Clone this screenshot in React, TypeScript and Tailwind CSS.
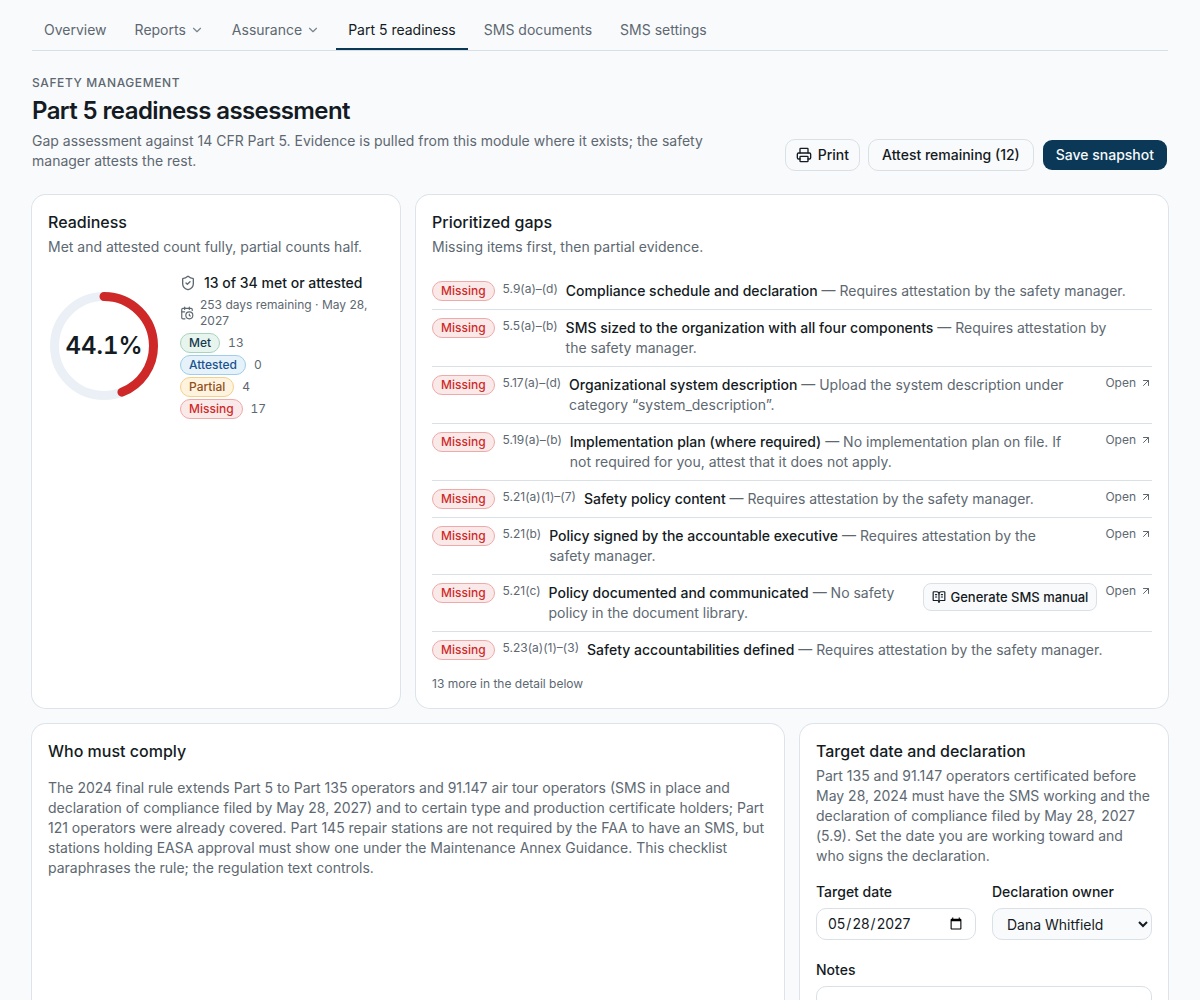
import type { ReactNode } from "react";
import {
  ArrowUpRight,
  BookOpenText,
  CalendarClock,
  ChevronDown,
  Printer,
  ShieldCheck,
} from "lucide-react";

const tabs = [
  { label: "Overview" },
  { label: "Reports", menu: true },
  { label: "Assurance", menu: true },
  { label: "Part 5 readiness", active: true },
  { label: "SMS documents" },
  { label: "SMS settings" },
];

const badgeStyles = {
  Met: "border-[#a9d3bc] bg-[#e8f4ee] text-[#15394f]",
  Attested: "border-[#9fcdea] bg-[#e5f2fa] text-[#1b5391]",
  Partial: "border-[#f5d08a] bg-[#fef3df] text-[#92501b]",
  Missing: "border-[#efa9a9] bg-[#fae9e9] text-[#cf2a2a]",
};

type Status = keyof typeof badgeStyles;

const counts: { status: Status; count: number }[] = [
  { status: "Met", count: 13 },
  { status: "Attested", count: 0 },
  { status: "Partial", count: 4 },
  { status: "Missing", count: 17 },
];

const attestation = "Requires attestation by the safety manager.";

const gaps = [
  { cite: "5.9(a)–(d)", title: "Compliance schedule and declaration", detail: attestation },
  {
    cite: "5.5(a)–(b)",
    title: "SMS sized to the organization with all four components",
    detail: "Requires attestation by the\u00a0safety manager.",
  },
  {
    cite: "5.17(a)–(d)",
    title: "Organizational system description",
    detail: "Upload the system description under category “system_description”.",
    open: true,
  },
  {
    cite: "5.19(a)–(b)",
    title: "Implementation plan (where required)",
    detail: "No implementation plan on file. If not\u00a0required for you, attest that it does not apply.",
    open: true,
  },
  { cite: "5.21(a)(1)–(7)", title: "Safety policy content", detail: attestation, open: true },
  {
    cite: "5.21(b)",
    title: "Policy signed by the accountable executive",
    detail: "Requires attestation by the safety\u00a0manager.",
    open: true,
  },
  {
    cite: "5.21(c)",
    title: "Policy documented and communicated",
    detail: "No safety policy in the document library.",
    open: true,
    generate: true,
  },
  { cite: "5.23(a)(1)–(3)", title: "Safety accountabilities defined", detail: attestation },
];

const Badge = ({ status }: { status: Status }) => (
  <span
    className={`inline-flex h-5 shrink-0 items-center rounded-full border px-2 text-xs font-medium ${badgeStyles[status]}`}
  >
    {status}
  </span>
);

type CardProps = {
  title: string;
  description?: string;
  className?: string;
  children: ReactNode;
};

const Card = ({ title, description, className = "", children }: CardProps) => (
  <section className={`flex flex-col gap-4 rounded-[14px] bg-white p-4 ring-1 ring-[#dde3e8] ${className}`}>
    <div className="flex flex-col gap-1">
      <h2 className="text-base leading-[22px] font-medium">{title}</h2>
      {description && <p className="text-[#5d6871]">{description}</p>}
    </div>
    {children}
  </section>
);

const ScoreRing = ({ value }: { value: number }) => (
  <div className="relative flex size-28 shrink-0 items-center justify-center">
    <svg viewBox="0 0 112 112" className="absolute inset-0 -rotate-90" fill="none" strokeWidth="9">
      <circle cx="56" cy="56" r="49.5" stroke="#eaf0f5" />
      <circle
        cx="56"
        cy="56"
        r="49.5"
        stroke="#ce2828"
        strokeLinecap="round"
        pathLength="100"
        strokeDasharray={`${value} 100`}
      />
    </svg>
    <span className="relative text-2xl font-semibold tabular-nums">{value}%</span>
  </div>
);

const App = () => {
  return (
    <div className="min-h-screen bg-[#f9fafc] px-8 pt-2.5 pb-8 font-['Inter',sans-serif] text-sm text-[#141b23]">
      <nav className="flex gap-1 border-b border-[#d6dfe6]">
        {tabs.map((tab) => (
          <a
            key={tab.label}
            href="#"
            className={`flex h-10 items-center gap-1 border-b-2 px-3 pt-0.5 ${
              tab.active ? "border-[#0b3856]" : "border-transparent text-[#5d6871]"
            }`}
          >
            {tab.label}
            {tab.menu && <ChevronDown className="size-3.5 opacity-80" />}
          </a>
        ))}
      </nav>

      <header className="mt-6 flex items-end justify-between gap-4">
        <div className="max-w-2xl">
          <p className="text-xs font-medium tracking-wider text-[#5d6871] uppercase">Safety management</p>
          <h1 className="mt-1 text-2xl font-semibold tracking-tight">Part 5 readiness assessment</h1>
          <p className="mt-1 text-[#5d6871]">
            Gap assessment against 14 CFR Part 5. Evidence is pulled from this module where it exists; the
            safety manager attests the rest.
          </p>
        </div>
        <div className="flex shrink-0 gap-2">
          <button className="flex h-8 items-center gap-1.5 rounded-[10px] border border-[#d9e1e7] px-2.5 font-medium">
            <Printer className="size-4" />
            Print
          </button>
          <button className="flex h-8 items-center rounded-[10px] border border-[#d9e1e7] px-[13px] font-medium">
            Attest remaining (12)
          </button>
          <button className="flex h-8 items-center rounded-[10px] border border-transparent bg-[#0b3856] bg-clip-padding px-[13px] font-medium text-[#f5f9fc]">
            Save snapshot
          </button>
        </div>
      </header>

      <main className="mt-6 grid grid-cols-3 gap-4">
        <Card title="Readiness" description="Met and attested count fully, partial counts half.">
          <div className="flex items-center gap-5">
            <ScoreRing value={44.1} />
            <div className="flex flex-col gap-1">
              <div className="flex items-center gap-2 font-medium">
                <ShieldCheck className="size-4 shrink-0 text-[#5d6871]" />
                13 of 34 met or attested
              </div>
              <div className="flex items-center gap-1.5 text-xs text-[#5d6871]">
                <CalendarClock className="size-3.5 shrink-0" />
                253 days remaining · May 28, 2027
              </div>
              <ul className="flex flex-col gap-0.5">
                {counts.map(({ status, count }) => (
                  <li key={status} className="flex items-center gap-2 text-xs text-[#5d6871] tabular-nums">
                    <Badge status={status} />
                    {count}
                  </li>
                ))}
              </ul>
            </div>
          </div>
        </Card>

        <Card
          title="Prioritized gaps"
          description="Missing items first, then partial evidence."
          className="col-span-2"
        >
          <div>
            <ul className="divide-y divide-[#d9e1e7]">
              {gaps.map((gap) => (
                <li key={gap.cite} className="flex items-start gap-2 py-2">
                  <Badge status="Missing" />
                  <span className="shrink-0 text-xs text-[#5d6871]">{gap.cite}</span>
                  <p className="min-w-0 flex-1">
                    <span className="font-medium">{gap.title}</span>
                    <span className="text-[#5d6871]"> — {gap.detail}</span>
                  </p>
                  {gap.generate && (
                    <button className="flex h-7 shrink-0 items-center gap-1 rounded-lg border border-[#d9e1e7] bg-[#f9fafc] px-2 text-[13px] font-medium">
                      <BookOpenText className="size-3.5" />
                      Generate SMS manual
                    </button>
                  )}
                  {gap.open && (
                    <a href="#" className="flex shrink-0 items-center gap-1 text-xs text-[#5d6871]">
                      Open
                      <ArrowUpRight className="size-3" />
                    </a>
                  )}
                </li>
              ))}
            </ul>
            <p className="mt-2 text-xs text-[#5d6871]">13 more in the detail below</p>
          </div>
        </Card>

        <Card title="Who must comply" className="col-span-2">
          <p className="text-[#5d6871]">
            The 2024 final rule extends Part 5 to Part 135 operators and 91.147 air tour operators (SMS in
            place and declaration of compliance filed by May 28, 2027) and to certain type and production
            certificate holders; Part 121 operators were already covered. Part 145 repair stations are not
            required by the FAA to have an SMS, but stations holding EASA approval must show one under the
            Maintenance Annex Guidance. This checklist paraphrases the rule; the regulation text controls.
          </p>
        </Card>

        <Card
          title="Target date and declaration"
          description="Part 135 and 91.147 operators certificated before May 28, 2024 must have the SMS working and the declaration of compliance filed by May 28, 2027 (5.9). Set the date you are working toward and who signs the declaration."
        >
          <form className="flex flex-col gap-5">
            <div className="grid grid-cols-2 gap-4">
              <div className="flex flex-col gap-1.5">
                <label htmlFor="target-date" className="font-medium">
                  Target date
                </label>
                <input
                  id="target-date"
                  type="date"
                  defaultValue="2027-05-28"
                  className="h-8 w-full rounded-[10px] border border-[#d9e1e7] px-2.5"
                />
              </div>
              <div className="flex flex-col gap-1.5">
                <label htmlFor="owner" className="font-medium">
                  Declaration owner
                </label>
                <select
                  id="owner"
                  className="h-8 w-full rounded-[10px] border border-[#d9e1e7] bg-[#f9fafc] px-2.5"
                >
                  <option>Dana Whitfield</option>
                </select>
              </div>
            </div>
            <div className="flex flex-col gap-1.5">
              <label htmlFor="notes" className="font-medium">
                Notes
              </label>
              <textarea id="notes" rows={3} className="rounded-[10px] border border-[#d9e1e7] px-2.5 py-2" />
            </div>
          </form>
        </Card>
      </main>
    </div>
  );
};

export default App;
